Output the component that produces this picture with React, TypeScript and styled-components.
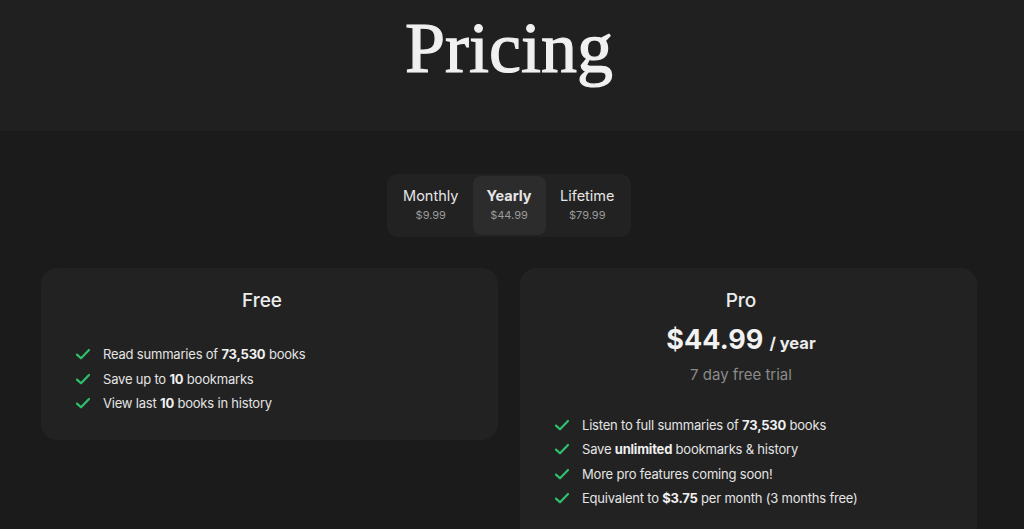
import React from "react";
import styled, { createGlobalStyle } from "styled-components";

const Global = createGlobalStyle`
  html, body { margin: 0; padding: 0; background: #1b1b1b; }
  body { font-family: Inter, "Noto Sans", sans-serif; color: #ececec; }
  * { box-sizing: border-box; }
`;

const Page = styled.div`
  width: 1024px;
  min-height: 529px;
  overflow: hidden;
  background: #1b1b1b;
`;

const Header = styled.header`
  height: 131px;
  background: #202020;
  display: flex;
  justify-content: center;
  padding-right: 6px;
`;

const Title = styled.h1`
  margin: 0;
  padding-top: 8px;
  font-family: "Liberation Serif", "Times New Roman", serif;
  font-weight: 400;
  font-size: 72px;
  line-height: 80px;
  color: #f0f0f0;
  -webkit-text-stroke: 1.2px #f0f0f0;
`;

const Main = styled.main`
  padding: 43px 47px 0 41px;
  display: flex;
  flex-direction: column;
  align-items: center;
`;

const Tabs = styled.div`
  display: flex;
  padding: 2px;
  background: #222222;
  border-radius: 10px;
  width: 244px;
  height: 63px;
`;

const Tab = styled.div<{ $active?: boolean }>`
  flex: ${(p) => (p.$active ? "0 0 73px" : "1")};
  display: flex;
  flex-direction: column;
  align-items: center;
  justify-content: center;
  gap: 3px;
  border-radius: 8px;
  background: ${(p) => (p.$active ? "#2c2c2c" : "transparent")};
  padding-bottom: 2px;
`;

const TabLabel = styled.div<{ $active?: boolean }>`
  font-size: 14.5px;
  line-height: 18px;
  font-weight: ${(p) => (p.$active ? 700 : 400)};
  color: #e6e6e6;
`;

const TabPrice = styled.div`
  font-size: 11px;
  line-height: 14px;
  color: #9a9a9a;
`;

const Cards = styled.div`
  margin-top: 31px;
  width: 100%;
  display: grid;
  grid-template-columns: 1fr 1fr;
  gap: 22px;
  align-items: start;
`;

const Card = styled.section<{ $tall?: boolean }>`
  background: #222222;
  border-radius: 16px;
  padding: 21px 49px 0 34px;
  height: ${(p) => (p.$tall ? "300px" : "172px")};
  display: flex;
  flex-direction: column;
`;

const CardTitle = styled.h2`
  margin: 0;
  text-align: center;
  font-size: 19px;
  line-height: 24px;
  font-weight: 500;
  color: #ececec;
`;

const PriceRow = styled.div`
  margin-top: 12px;
  display: flex;
  justify-content: center;
  align-items: baseline;
  gap: 6px;
`;

const Price = styled.span`
  font-size: 27px;
  line-height: 30px;
  font-weight: 700;
  color: #f2f2f2;
`;

const Per = styled.span`
  font-size: 16.5px;
  font-weight: 700;
  color: #ececec;
`;

const Trial = styled.div`
  margin-top: 10px;
  text-align: center;
  font-size: 15px;
  line-height: 20px;
  color: #8a8a8a;
`;

const List = styled.ul<{ $top: number; $gap: number }>`
  list-style: none;
  margin: ${(p) => p.$top}px 0 0 0;
  padding: 0;
  display: flex;
  flex-direction: column;
  gap: ${(p) => p.$gap}px;
`;

const Item = styled.li`
  display: flex;
  align-items: center;
  gap: 12px;
  font-size: 13px;
  line-height: 18px;
  letter-spacing: -0.2px;
  color: #e4e4e4;
  white-space: nowrap;
  b { font-weight: 700; color: #f0f0f0; }
`;

const Check = () => (
  <svg width="16" height="16" viewBox="0 0 16 16" fill="none">
    <path d="M2 8.6 L6 12.3 L14 4" stroke="#2fc06c" strokeWidth="2.2" strokeLinecap="round" strokeLinejoin="round" />
  </svg>
);

export default function App() {
  return (
    <Page>
      <Global />
      <Header>
        <Title>Pricing</Title>
      </Header>
      <Main>
        <Tabs>
          <Tab>
            <TabLabel>Monthly</TabLabel>
            <TabPrice>$9.99</TabPrice>
          </Tab>
          <Tab $active>
            <TabLabel $active>Yearly</TabLabel>
            <TabPrice>$44.99</TabPrice>
          </Tab>
          <Tab>
            <TabLabel>Lifetime</TabLabel>
            <TabPrice>$79.99</TabPrice>
          </Tab>
        </Tabs>
        <Cards>
          <Card>
            <CardTitle>Free</CardTitle>
            <List $top={32} $gap={6.6}>
              <Item><Check /><span>Read summaries of <b>73,530</b> books</span></Item>
              <Item><Check /><span>Save up to <b>10</b> bookmarks</span></Item>
              <Item><Check /><span>View last <b>10</b> books in history</span></Item>
            </List>
          </Card>
          <Card $tall>
            <CardTitle>Pro</CardTitle>
            <PriceRow>
              <Price>$44.99</Price>
              <Per>/ year</Per>
            </PriceRow>
            <Trial>7 day free trial</Trial>
            <List $top={31} $gap={6.3}>
              <Item><Check /><span>Listen to full summaries of <b>73,530</b> books</span></Item>
              <Item><Check /><span>Save <b>unlimited</b> bookmarks &amp; history</span></Item>
              <Item><Check /><span>More pro features coming soon!</span></Item>
              <Item><Check /><span>Equivalent to <b>$3.75</b> per month (3 months free)</span></Item>
            </List>
          </Card>
        </Cards>
      </Main>
    </Page>
  );
}
